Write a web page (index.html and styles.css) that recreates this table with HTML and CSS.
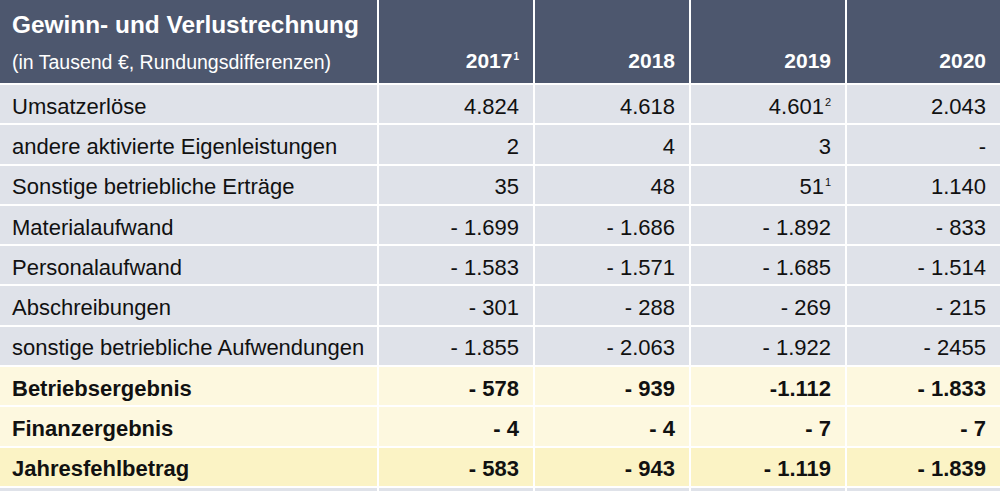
FILE: index.html
```html
<!DOCTYPE html>
<html lang="de">
<head>
<meta charset="utf-8">
<title>Gewinn- und Verlustrechnung</title>
<link rel="stylesheet" href="styles.css">
</head>
<body>
<div class="table">
  <div class="cell head first">
    <div class="title">Gewinn- und Verlustrechnung</div>
    <div class="subtitle">(in Tausend €, Rundungsdifferenzen)</div>
  </div>
  <div class="cell head num"><span>2017<sup>1</sup></span></div>
  <div class="cell head num"><span>2018</span></div>
  <div class="cell head num"><span>2019</span></div>
  <div class="cell head num"><span>2020</span></div>

  <div class="cell label">Umsatzerlöse</div>
  <div class="cell num">4.824</div>
  <div class="cell num">4.618</div>
  <div class="cell num"><span>4.601<sup>2</sup></span></div>
  <div class="cell num">2.043</div>

  <div class="cell label">andere aktivierte Eigenleistungen</div>
  <div class="cell num">2</div>
  <div class="cell num">4</div>
  <div class="cell num">3</div>
  <div class="cell num">-</div>

  <div class="cell label">Sonstige betriebliche Erträge</div>
  <div class="cell num">35</div>
  <div class="cell num">48</div>
  <div class="cell num"><span>51<sup>1</sup></span></div>
  <div class="cell num">1.140</div>

  <div class="cell label">Materialaufwand</div>
  <div class="cell num">- 1.699</div>
  <div class="cell num">- 1.686</div>
  <div class="cell num">- 1.892</div>
  <div class="cell num">- 833</div>

  <div class="cell label">Personalaufwand</div>
  <div class="cell num">- 1.583</div>
  <div class="cell num">- 1.571</div>
  <div class="cell num">- 1.685</div>
  <div class="cell num">- 1.514</div>

  <div class="cell label">Abschreibungen</div>
  <div class="cell num">- 301</div>
  <div class="cell num">- 288</div>
  <div class="cell num">- 269</div>
  <div class="cell num">- 215</div>

  <div class="cell label">sonstige betriebliche Aufwendungen</div>
  <div class="cell num">- 1.855</div>
  <div class="cell num">- 2.063</div>
  <div class="cell num">- 1.922</div>
  <div class="cell num">- 2455</div>

  <div class="cell label sum">Betriebsergebnis</div>
  <div class="cell num sum">- 578</div>
  <div class="cell num sum">- 939</div>
  <div class="cell num sum">-1.112</div>
  <div class="cell num sum">- 1.833</div>

  <div class="cell label sum">Finanzergebnis</div>
  <div class="cell num sum">- 4</div>
  <div class="cell num sum">- 4</div>
  <div class="cell num sum">- 7</div>
  <div class="cell num sum">- 7</div>

  <div class="cell label total">Jahresfehlbetrag</div>
  <div class="cell num total">- 583</div>
  <div class="cell num total">- 943</div>
  <div class="cell num total">- 1.119</div>
  <div class="cell num total">- 1.839</div>

  <div class="cell tail"></div>
  <div class="cell tail"></div>
  <div class="cell tail"></div>
  <div class="cell tail"></div>
  <div class="cell tail"></div>
</div>
</body>
</html>
```
FILE: styles.css
```css
html, body {
  margin: 0;
  padding: 0;
  background: #ffffff;
  overflow: hidden;
}

body {
  font-family: "Liberation Sans", Arial, sans-serif;
  color: #111111;
  width: 1000px;
  height: 491px;
}

.table {
  display: grid;
  grid-template-columns: 377px 154px 154px 154px 1fr;
  grid-template-rows: 83px repeat(10, 38.3px) 10px;
  gap: 2px;
}

.cell {
  background: #dfe2e9;
  display: flex;
  align-items: center;
  font-size: 22px;
  line-height: 1;
  white-space: nowrap;
  padding-top: 5px;
}

.label {
  padding-left: 12px;
}

.num {
  justify-content: flex-end;
  padding-right: 14px;
}

.head {
  background: #4d576e;
  color: #ffffff;
  padding-top: 0;
}

.head.first {
  flex-direction: column;
  align-items: flex-start;
  justify-content: flex-start;
  padding-left: 12px;
}

.title {
  font-weight: bold;
  font-size: 24.4px;
  margin-top: 13px;
}

.subtitle {
  font-size: 19.5px;
  margin-top: 16px;
}

.head.num {
  align-items: flex-end;
  padding-bottom: 12px;
  font-weight: bold;
  font-size: 21px;
}

sup {
  font-size: 11px;
  line-height: 0;
  vertical-align: 8px;
  margin-left: 1px;
}

.head sup {
  font-size: 10px;
}

.sum {
  background: #fdf8df;
  font-weight: bold;
}

.total {
  background: #fbf3c5;
  font-weight: bold;
}

.tail {
  background: #dfe2e9;
  padding-top: 0;
}
```
